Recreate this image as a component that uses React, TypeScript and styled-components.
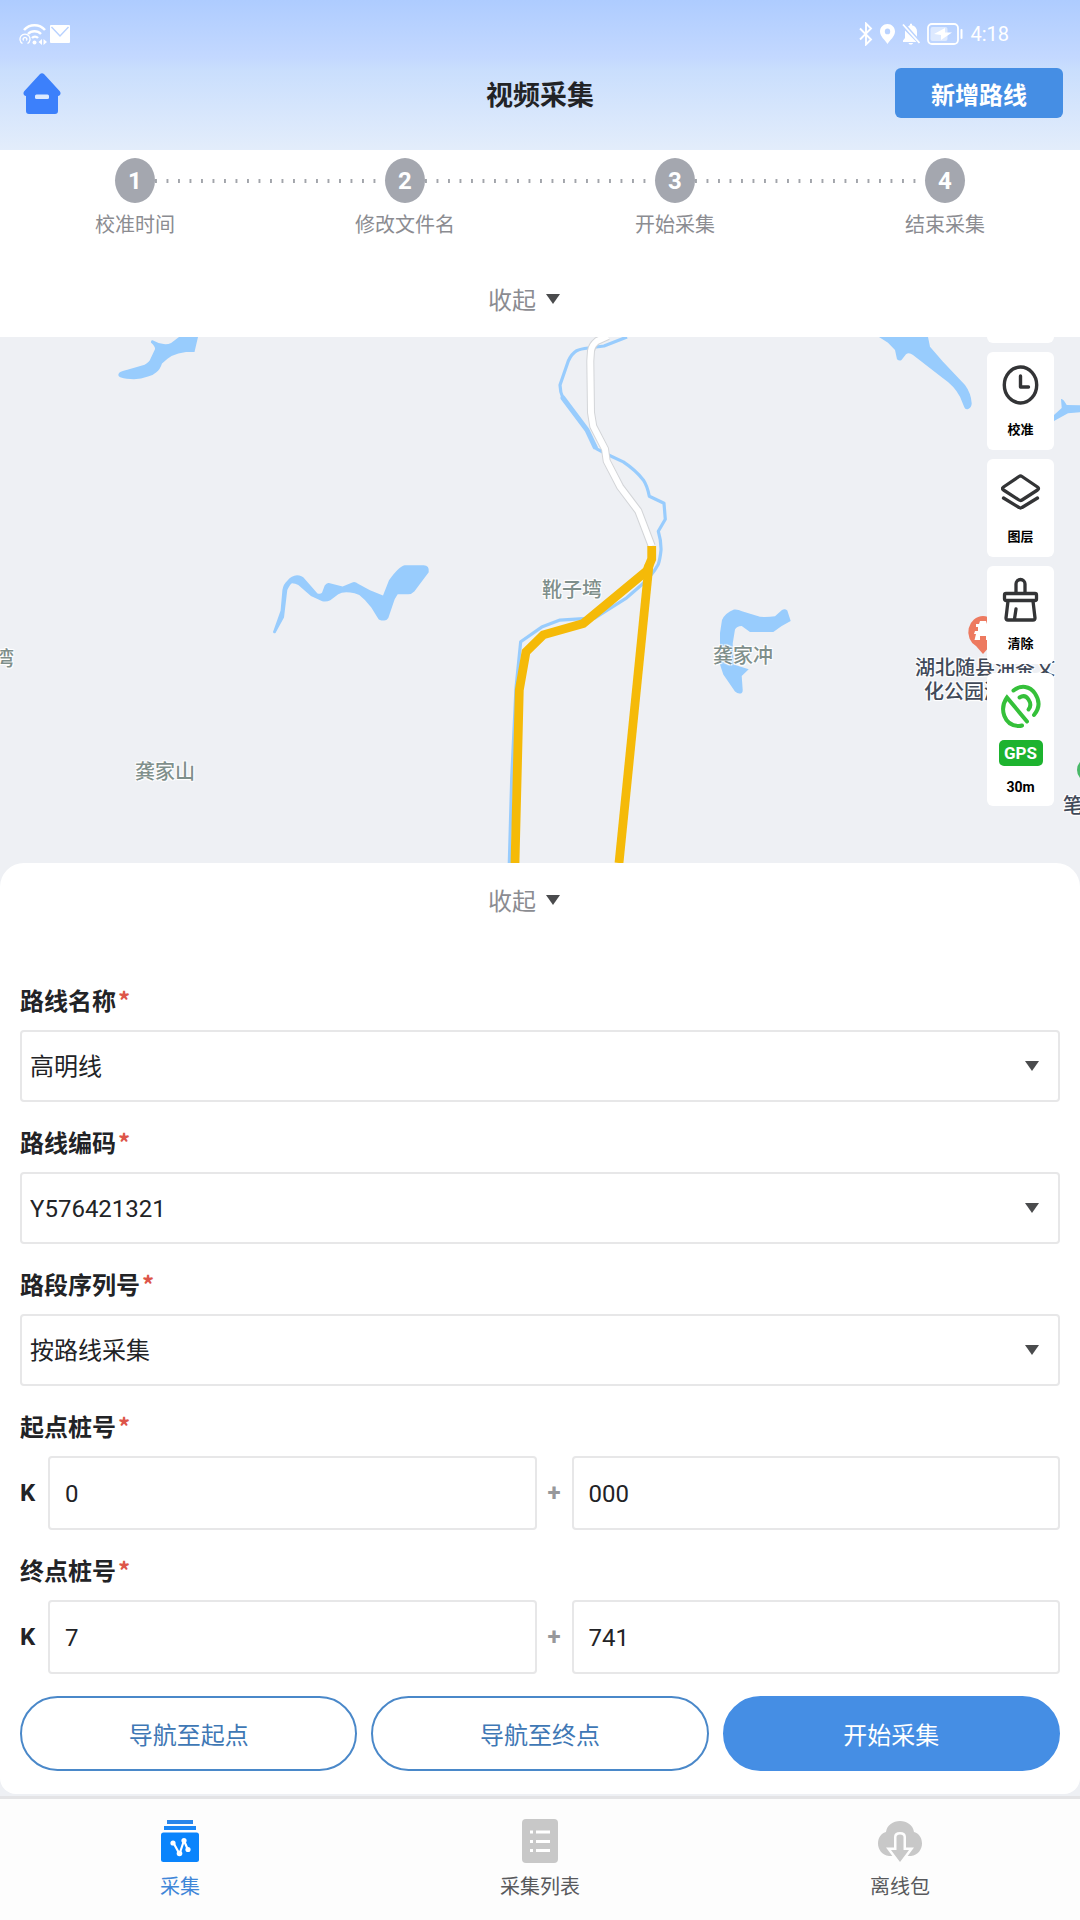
import React, {useState} from "react";
import styled, {createGlobalStyle} from "styled-components";

export interface IField {
  id: string;
  label: string;
}

export interface ISelectField extends IField {
  options: string[];
}

export interface IStakeField extends IField {
  km: string;
  meter: string;
}

export interface ITool {
  label: string;
  icon: React.ReactNode;
}

const GlobalStyle = createGlobalStyle`
  * {
    box-sizing: border-box;
  }

  body {
    margin: 0;
    background: #eef0f4;
    color: #222326;
    font-family: Roboto, "Noto Sans CJK SC", sans-serif;
    font-size: 24px;
  }

  button, input, select {
    font: inherit;
    color: inherit;
    margin: 0;
  }

  svg {
    display: block;
  }
`;

const Page = styled.div`
  min-height: 100vh;
  display: flex;
  flex-direction: column;
`;

const Header = styled.header`
  padding-bottom: 32px;
  background: linear-gradient(#aeccff 0%, #c3d8ff 38%, #c9defd 46%, #e3edfb 100%);
`;

const StatusBar = styled.div`
  height: 68px;
  padding: 0 71px 0 19px;
  display: flex;
  align-items: center;
  justify-content: space-between;
  color: #fff;
  font-size: 20px;
  line-height: 24px;
`;

const StatusGroup = styled.div<{ $gap: number }>`
  display: flex;
  align-items: center;
  gap: ${({$gap}) => $gap}px;
`;

const TitleBar = styled.div`
  display: grid;
  grid-template-columns: 1fr auto 1fr;
  align-items: center;
  padding: 0 17px;
`;

const HomeButton = styled.button`
  justify-self: start;
  padding: 2px 0 0 5px;
  border: none;
  background: none;
`;

const Title = styled.h1`
  margin: 0;
  padding-top: 6px;
  font-size: 27px;
  line-height: 40px;
`;

const AddButton = styled.button`
  justify-self: end;
  width: 168px;
  height: 50px;
  padding: 0;
  border: none;
  border-radius: 6px;
  background: #458ee4;
  color: #fff;
  font-weight: bold;
`;

const StepSection = styled.section`
  background: #fff;
`;

const Steps = styled.ol`
  margin: 0;
  padding: 8px 0 24px;
  display: flex;
  list-style: none;
`;

const Step = styled.li`
  flex: 1;
  display: grid;
  grid-template-columns: 1fr 40px 1fr;
  align-items: center;
  row-gap: 8px;
`;

const StepLine = styled.span<{ $hidden?: boolean }>`
  height: 4px;
  visibility: ${({$hidden}) => $hidden ? "hidden" : "visible"};
  background: linear-gradient(90deg, #a2a5ab 2px, transparent 2px) 0 0 / 11px 4px round;
`;

const StepNumber = styled.span`
  height: 45px;
  border-radius: 50%;
  background: #a4a7af;
  color: #fff;
  font-weight: bold;
  line-height: 47px;
  text-align: center;
`;

const StepLabel = styled.span`
  grid-column: 1 / -1;
  color: #8b8c91;
  font-size: 20px;
  line-height: 28px;
  text-align: center;
`;

const ToggleButton = styled.button<{ $height: number }>`
  width: 100%;
  height: ${({$height}) => $height}px;
  padding: 0 32px 3px 0;
  display: flex;
  align-items: center;
  justify-content: center;
  gap: 10px;
  border: none;
  background: none;
  color: #8b8c91;
`;

const Triangle = styled.span`
  border-left: 7px solid transparent;
  border-right: 7px solid transparent;
  border-top: 10px solid #4a4b4d;
`;

const MapArea = styled.section`
  position: relative;
  height: 526px;
  overflow: hidden;
`;

const MapCanvas = styled.svg`
  width: 100%;
  height: 100%;
`;

const MapLabel = styled.span<{ $x: number; $y: number; $dark?: boolean }>`
  position: absolute;
  left: ${({$x}) => $x}px;
  top: ${({$y}) => $y}px;
  color: ${({$dark}) => $dark ? "#414a59" : "#7f8f8b"};
  font-size: 20px;
  font-weight: 500;
  line-height: 26px;
  white-space: pre;
  text-shadow: 1px 1px 1px #fff, -1px -1px 1px #fff, 1px -1px 1px #fff, -1px 1px 1px #fff;
`;

const ToolColumn = styled.div`
  position: absolute;
  top: -92px;
  right: 26px;
  width: 67px;
  display: flex;
  flex-direction: column;
  gap: 9px;
`;

const ToolButton = styled.button`
  height: 98px;
  padding: 10px 0 0;
  display: flex;
  flex-direction: column;
  align-items: center;
  gap: 10px;
  border: none;
  border-radius: 6px;
  background: #fff;
  color: #000;
  font-size: 13px;
  font-weight: bold;
  line-height: 16px;
`;

const GpsCard = styled.div`
  height: 133px;
  padding-top: 11px;
  display: flex;
  flex-direction: column;
  align-items: center;
  gap: 11px;
  border-radius: 6px;
  background: #fff;
  color: #000;
  font-size: 14px;
  font-weight: bold;
  line-height: 20px;
`;

const GpsBadge = styled.span`
  width: 44px;
  border-radius: 5px;
  background: #1db32f;
  color: #fff;
  font-size: 17px;
  line-height: 26px;
  text-align: center;
`;

const Panel = styled.form`
  padding: 0 20px 23px;
  border-radius: 24px 24px 16px 16px;
  background: #fff;
`;

const Fields = styled.div`
  padding-top: 47px;
  display: flex;
  flex-direction: column;
  gap: 26px;
`;

const Field = styled.div`
  display: flex;
  flex-direction: column;
  gap: 12px;
`;

const FieldLabel = styled.label`
  font-weight: bold;
  line-height: 32px;
`;

const Required = styled.span`
  padding-left: 2px;
  color: #dd5549;
  font-family: "Noto Sans CJK SC", sans-serif;
  line-height: 24px;
`;

const SelectBox = styled.div`
  display: grid;
  grid-template-columns: 1fr 35px;
  align-items: center;
`;

const Select = styled.select`
  grid-area: 1 / 1 / 2 / 3;
  height: 72px;
  padding: 2px 8px 0;
  appearance: none;
  border: 2px solid #e7e7e8;
  border-radius: 4px;
  background: #fff;
`;

const SelectArrow = styled(Triangle)`
  grid-area: 1 / 2;
  width: 14px;
  pointer-events: none;
  z-index: 1;
`;

const StakeRow = styled.div`
  display: grid;
  grid-template-columns: 28px 1fr 35px 1fr;
  align-items: center;
`;

const StakePrefix = styled.span`
  font-weight: bold;
`;

const StakePlus = styled.span`
  color: #97989b;
  font-weight: bold;
  text-align: center;
`;

const StakeInput = styled.input`
  width: 100%;
  height: 74px;
  padding: 2px 15px 0;
  border: 2px solid #e7e7e8;
  border-radius: 4px;
  background: #fff;
`;

const Actions = styled.div`
  margin-top: 22px;
  display: flex;
  gap: 14px;
`;

const ActionButton = styled.button<{ $primary?: boolean }>`
  flex: 1;
  height: 75px;
  padding: 0;
  border: 2px solid ${({$primary}) => $primary ? "#458ee4" : "#4a88c9"};
  border-radius: 38px;
  background: ${({$primary}) => $primary ? "#458ee4" : "#fff"};
  color: ${({$primary}) => $primary ? "#fff" : "#3f78b5"};
`;

const TabBar = styled.nav`
  margin-top: 2px;
  flex: 1;
  display: flex;
  border-top: 3px solid #e4e4e6;
  background: #fdfdfd;
`;

const Tab = styled.a<{ $active?: boolean }>`
  flex: 1;
  padding-top: 20px;
  display: flex;
  flex-direction: column;
  align-items: center;
  gap: 10px;
  color: ${({$active}) => $active ? "#3f86d8" : "#58595c"};
  font-size: 20px;
  line-height: 28px;
  text-decoration: none;
`;

const HotspotIcon = () => (
  <svg width="28" height="24" viewBox="0 0 28 24" fill="none" stroke="#fff">
    <path d="M5 8a14 14 0 0 1 21 0" strokeWidth="2.6"/>
    <path d="M9 12a9 9 0 0 1 13 0" strokeWidth="2.4"/>
    <path d="M13 16a4 4 0 0 1 6 0" strokeWidth="2.4"/>
    <circle cx="15.500" cy="20.500" r="2" fill="#fff" stroke="none"/>
    <path d="M3.500 21.500a5 5 0 1 1 5 0M4.700 18.500a1.800 1.800 0 1 1 2.600 0" strokeWidth="1.300"/>
    <path d="M23 17v6l-3.500-3zM24.500 17v6l3.500-3z" fill="#fff" stroke="none"/>
  </svg>
);

const MailIcon = () => (
  <svg width="20" height="18" viewBox="0 0 20 18">
    <rect width="20" height="18" rx="1" fill="#fff"/>
    <path d="M1.500 2l8.500 9 8.500-9" fill="none" stroke="#b9d2ff" strokeWidth="1.400"/>
  </svg>
);

const BluetoothIcon = () => (
  <svg width="14" height="24" viewBox="0 0 14 24" fill="none" stroke="#fff" strokeWidth="1.900">
    <path d="M1 6.500l11 11-5 5V1.500l5 5-11 11"/>
  </svg>
);

const PinIcon = () => (
  <svg width="15" height="20" viewBox="0 0 15 20">
    <path fillRule="evenodd" fill="#fff" d="M7.500 0C3.300 0 0 3.200 0 7.500 0 12.500 5 16 7.500 20 10 16 15 12.500 15 7.500 15 3.200 11.700 0 7.500 0zm0 4.500a2.700 2.900 0 1 1 0 5.800 2.700 2.900 0 0 1 0-5.800z"/>
  </svg>
);

const MuteIcon = () => (
  <svg width="18" height="22" viewBox="0 0 18 22">
    <path fill="#fff" d="M3 7.500L14.500 19H1v-1.500l2-2.500zM6 3.500C7 2.500 8 2.200 8 2.200V.8h2v1.400c3 .6 5 3 5 6.300v5.300zM6.500 20h4.500c-.5 2-4 2-4.500 0z"/>
    <path d="M1 1.500L17.500 20" stroke="#fff" strokeWidth="1.800"/>
  </svg>
);

const BatteryIcon = () => (
  <svg width="36" height="22" viewBox="0 0 36 22">
    <rect x="1" y="1" width="30" height="20" rx="4" fill="none" stroke="#fff" strokeWidth="1.800"/>
    <rect x="3.500" y="4" width="17" height="14" rx="2" fill="#fff" opacity=".5"/>
    <path d="M7 11l11-6v4.500h7L14 17v-5z" fill="#fff"/>
    <rect x="33.500" y="6" width="2" height="10" rx="1" fill="#fff"/>
  </svg>
);

const HomeIcon = () => (
  <svg width="40" height="42" viewBox="0 0 40 42">
    <path fill="#3c80fb" d="M17.800 1.200c1.400-1.300 3-1.300 4.400 0l15.600 17c1.400 1.800.8 4.300-1.800 4.800V38a3 3 0 0 1-3 3H7a3 3 0 0 1-3-3V23c-2.600-.5-3.200-3-1.800-4.800z"/>
    <rect x="13" y="21.500" width="14" height="4.500" rx="1.500" fill="#dbe9ff"/>
  </svg>
);

const ClockIcon = () => (
  <svg width="40" height="50" viewBox="0 0 40 50" fill="none" stroke="#333436">
    <ellipse cx="19.500" cy="23" rx="16.200" ry="18" strokeWidth="3.400"/>
    <path d="M19.500 14v11h8" strokeWidth="3.400" strokeLinecap="round" strokeLinejoin="round"/>
  </svg>
);

const LayersIcon = () => (
  <svg width="40" height="50" viewBox="0 0 40 50" fill="none" stroke="#333436" strokeWidth="3.300" strokeLinecap="round" strokeLinejoin="round">
    <path d="M18 7.500q1.500-1 3 0L36.500 18q2 1.500 0 3L21 31q-1.500 1-3 0L2.500 21q-2-1.500 0-3z"/>
    <path d="M2.500 29l15.500 9.500q1.500 1 3 0L36.500 29"/>
  </svg>
);

const BrushIcon = () => (
  <svg width="40" height="50" viewBox="0 0 40 50" fill="none" stroke="#333436" strokeWidth="3.300" strokeLinejoin="round" strokeLinecap="round">
    <path d="M15 17V8a4.500 4.500 0 0 1 9 0v9"/>
    <rect x="3.500" y="17.500" width="32" height="7" rx="1.500"/>
    <path d="M7 25L5 42q0 2 2 2h25q2 0 2-2l-2-17M15 33l-1.500 10"/>
  </svg>
);

const SatelliteIcon = () => (
  <svg width="40" height="45" viewBox="0 0 40 45" fill="none" stroke="#35c03a" strokeWidth="4" strokeLinecap="round">
    <path d="M26 37.500L6 13.500C-2 25 3 42 18 42q1.500 0 3-.5"/>
    <path d="M12.500 6.500C20 .5 29 2 34 9.500s4.500 15-1 21.500"/>
    <path d="M18.500 13.500c4-2.500 7-1 9 2s2.500 7 0 10"/>
  </svg>
);

const CollectIcon = () => (
  <svg width="38" height="44" viewBox="0 0 38 44">
    <rect x="6" y="1" width="26" height="4" fill="#2a86ea"/>
    <rect x="3" y="7" width="32" height="4" fill="#1a86f5"/>
    <rect y="13.500" width="38" height="29.500" rx="2.500" fill="#0a84fc"/>
    <path d="M12 23l6.500 12L23 21.500l4 9.500" fill="none" stroke="#fff" strokeWidth="2.200" strokeLinejoin="round"/>
    <g fill="#fff">
      <circle cx="12" cy="24" r="2.600"/>
      <circle cx="18.500" cy="34.500" r="2.800"/>
      <circle cx="23" cy="21.500" r="2.600"/>
      <circle cx="27" cy="30.500" r="2.600"/>
    </g>
  </svg>
);

const ListIcon = () => (
  <svg width="36" height="44" viewBox="0 0 36 44">
    <rect width="36" height="44" rx="4" fill="#c8c8c8"/>
    <path d="M8 13h3M8 22.500h3M8 31.500h3M14 13h14M14 22.500h14M14 31.500h14" stroke="#fff" strokeWidth="3"/>
  </svg>
);

const CloudIcon = () => (
  <svg width="44" height="44" viewBox="0 0 44 44">
    <path fill="#c8c8c8" d="M11 37C4 36 0 30.500 0 24.500 0 18 4 14 8 13 9 6 15 2 22 2s13 4 14 11c4 1 8 5 8 11.500C44 30.500 40 36 33 37z"/>
    <path
      d="M18.500 18q0-2.500 3.500-2.500t3.500 2.500v13H31l-9 12-9-12h5.500z"
      fill="#c8c8c8" stroke="#fdfdfd" strokeWidth="5" paintOrder="stroke"
    />
  </svg>
);

const tools: ITool[] = [
  {label: "校准", icon: <ClockIcon/>},
  {label: "图层", icon: <LayersIcon/>},
  {label: "清除", icon: <BrushIcon/>},
];

const steps = ["校准时间", "修改文件名", "开始采集", "结束采集"];

const selectFields: ISelectField[] = [
  {id: "route-name", label: "路线名称", options: ["高明线"]},
  {id: "route-code", label: "路线编码", options: ["Y576421321"]},
  {id: "route-section", label: "路段序列号", options: ["按路线采集"]},
];

const stakeFields: IStakeField[] = [
  {id: "start-stake", label: "起点桩号", km: "0", meter: "000"},
  {id: "end-stake", label: "终点桩号", km: "7", meter: "741"},
];

const tabs = [
  {label: "采集", icon: <CollectIcon/>},
  {label: "采集列表", icon: <ListIcon/>},
  {label: "离线包", icon: <CloudIcon/>},
];

const RouteMap: React.FC = () => (
  <MapCanvas viewBox="0 0 1080 526" preserveAspectRatio="xMidYMin slice" aria-hidden="true">
    {/* water */}
    <g fill="#98ccfd">
      <path d="M179 0h19l-3.500 15H186q-8 1-14.500 4-5 3-9.500 7.500-2 6-5.300 8.500-3 3-8.700 4.500-7 2.500-14 2.700-8 0-13-1.700-4-1.500-2-4.500 2-2 8.400-3.200l17.200-5q5-3 6-6.300l4.500-9.500q0-3-4.200-6.600 0-2.500 1.700-2.100 5 3 11.100 3.800 4 .5 7.400-1.100z"/>
      <path d="M273 295l7.600-21.500 1.800-20.500q1-6 5.100-9.500 4-5 9.500-5.200 5 0 7.800 3.700l12.700 14.400q3 1 4.500-.7l2.700-7.200q2-3 4.200-2.500l13.700 3.500 9.700-4.100q3-1 5.700 1.400l12 6.500 13 5.200 6-15.200q5-7 8.700-10.500 4-4 6.900-4.600h19q6 0 5.100 7l-14.400 19.200q-3 3-6.300 2.900h-10.300q-3 4-4.400 9l-5 14.800q-2 3-5 2.400-4 0-5.200-2l-6.800-11q-6-8-12-12.500-5-2.500-9-2.500-8-1-12 1.700l-8 6q-4 2-8 1l-11.400-5.200-12.600-11q-3-1.800-6.300-1.800-2 1-4.700 6.900L284 280.500 275.500 296q-2 1-2.500-1z"/>
      <path d="M722 283q3-7 12-10.500 4-.5 8 1.800l18 5.500q8 .5 15-.6l7-6.200q3-2 5.300.6l3.400 10.400-9 5-8.400 6H750l-8.300-6q-5 0-6.700 3.600l-2.300 13.800 1 21 15 4.800-7 6.800 1 13.900q0 4-3.400 3.700-2 0-4.300-2l-11.700-17.200-3.300-10V296z"/>
      <path d="M879 0h49l2 9.700 13 15L965 48q6 8 6.700 18.300 0 4-3.400 5.700-3 1-4-1.700L960 59.700q-6-11-17-18.400L913 18q-4-3-7-.7l-4.300 5.400q-2 2-4.700-.4L895 13l-7-7.300z"/>
      <path d="M1054 84v-6l7.700-7-.7-9q2-1 5.700 6l13.300.3v7l-12 1z"/>
    </g>
    <path
      d="M627 0l-23 9-15.700 2q-8 1-11.600 2.700-5 3-8.400 10.300L560 48q0 7 3.300 14l23.400 31 10 18.800 11.300 6 15.300 7.100q12 8 20 18 4 6 6 16.400l14.700 7 1.300 16-7 12q3 10 2.700 19-1 9-2.700 14-6 11-16.600 20.500l-15 13-31.700 20-35 2.300-18.300 7-21 14.600L516 351l-4.300 90-2.400 85"
      fill="none" stroke="#98ccfd" strokeWidth="3.200" strokeLinejoin="round"
    />
    <path d="M563 61l24 32 8 17" fill="none" stroke="#98ccfd" strokeWidth="5" strokeLinecap="round"/>
    {/* road with its casing, then the recorded route */}
    {[["#d3d5d8", 8], ["#fff", 6]].map(([color, width]) => (
      <path
        key={color}
        d="M608-1l-11 5q-5 4-6 9.700L590.300 24l.7 51.600 2.300 13.800L605 112l1.700 12L620 149.700 638.300 174l13.400 35"
        fill="none" stroke={color} strokeWidth={width} strokeLinejoin="round"
      />
    ))}
    <g fill="none" stroke="#f5ba08" strokeWidth="8.800">
      <path d="M651.700 209v13l-5 12-63.400 52.500-40 11.300L526 315l-6.700 38L515 526"/>
      <path d="M649 228l-30 298"/>
    </g>
    <g>
      <path d="M983 279a15 16 0 0 1 7 30l-7 8-7-8a15 16 0 0 1 7-30z" fill="#ed7a60"/>
      <path d="M976 287h3l1-3h6l1 3h3v3h-2v4h4l1 3h-2v6h-5v-4h-6v4h-5.500l1.500-6h-2l1-3h3v-4h-2z" fill="#fff"/>
    </g>
    <circle cx="1089" cy="433" r="12" fill="#48b867"/>
  </MapCanvas>
);

const SelectField: React.FC<ISelectField> = ({id, label, options}) => (
  <Field>
    <FieldLabel htmlFor={id}>{label}<Required>*</Required></FieldLabel>
    <SelectBox>
      <Select id={id}>
        {options.map((option) => <option key={option}>{option}</option>)}
      </Select>
      <SelectArrow/>
    </SelectBox>
  </Field>
);

const StakeField: React.FC<IStakeField> = ({id, label, km, meter}) => {
  const [kmValue, setKmValue] = useState(km);
  const [meterValue, setMeterValue] = useState(meter);

  return (
    <Field>
      <FieldLabel htmlFor={id}>{label}<Required>*</Required></FieldLabel>
      <StakeRow>
        <StakePrefix>K</StakePrefix>
        <StakeInput id={id} value={kmValue} onChange={(e) => setKmValue(e.target.value)}/>
        <StakePlus>+</StakePlus>
        <StakeInput aria-label={label} value={meterValue} onChange={(e) => setMeterValue(e.target.value)}/>
      </StakeRow>
    </Field>
  );
}

const App: React.FC = () => {
  const [showSteps, setShowSteps] = useState(true);
  const [showFields, setShowFields] = useState(true);

  return (
    <Page>
      <GlobalStyle/>
      <Header>
        <StatusBar>
          <StatusGroup $gap={3}>
            <HotspotIcon/>
            <MailIcon/>
          </StatusGroup>
          <StatusGroup $gap={7}>
            <BluetoothIcon/>
            <PinIcon/>
            <MuteIcon/>
            <BatteryIcon/>
            <span>4:18</span>
          </StatusGroup>
        </StatusBar>
        <TitleBar>
          <HomeButton type="button" aria-label="首页"><HomeIcon/></HomeButton>
          <Title>视频采集</Title>
          <AddButton type="button">新增路线</AddButton>
        </TitleBar>
      </Header>

      <StepSection>
        {showSteps && (
          <Steps>
            {steps.map((step, i) => (
              <Step key={step}>
                <StepLine $hidden={i === 0}/>
                <StepNumber>{i + 1}</StepNumber>
                <StepLine $hidden={i === steps.length - 1}/>
                <StepLabel>{step}</StepLabel>
              </Step>
            ))}
          </Steps>
        )}
        <ToggleButton type="button" $height={74} onClick={() => setShowSteps(!showSteps)}>
          收起<Triangle/>
        </ToggleButton>
      </StepSection>

      <MapArea>
        <RouteMap/>
        <MapLabel $x={-6} $y={309}>湾</MapLabel>
        <MapLabel $x={135} $y={422}>龚家山</MapLabel>
        <MapLabel $x={542} $y={240}>靴子塆</MapLabel>
        <MapLabel $x={713} $y={306}>龚家冲</MapLabel>
        <MapLabel $x={915} $y={318} $dark>湖北随县油茶文</MapLabel>
        <MapLabel $x={924} $y={342} $dark>化公园游</MapLabel>
        <MapLabel $x={1063} $y={456} $dark>笔</MapLabel>
        <ToolColumn>
          <ToolButton as="div"/>
          {tools.map(({label, icon}) => (
            <ToolButton key={label} type="button">{icon}{label}</ToolButton>
          ))}
          <GpsCard>
            <SatelliteIcon/>
            <GpsBadge>GPS</GpsBadge>
            30m
          </GpsCard>
        </ToolColumn>
      </MapArea>

      <Panel onSubmit={(e) => e.preventDefault()}>
        <ToggleButton type="button" $height={76} onClick={() => setShowFields(!showFields)}>
          收起<Triangle/>
        </ToggleButton>
        {showFields && (
          <Fields>
            {selectFields.map((field) => <SelectField key={field.id} {...field}/>)}
            {stakeFields.map((field) => <StakeField key={field.id} {...field}/>)}
          </Fields>
        )}
        <Actions>
          <ActionButton type="button">导航至起点</ActionButton>
          <ActionButton type="button">导航至终点</ActionButton>
          <ActionButton type="submit" $primary>开始采集</ActionButton>
        </Actions>
      </Panel>

      <TabBar>
        {tabs.map(({label, icon}, i) => (
          <Tab key={label} href="#" $active={i === 0}>{icon}{label}</Tab>
        ))}
      </TabBar>
    </Page>
  );
}

export default App;
